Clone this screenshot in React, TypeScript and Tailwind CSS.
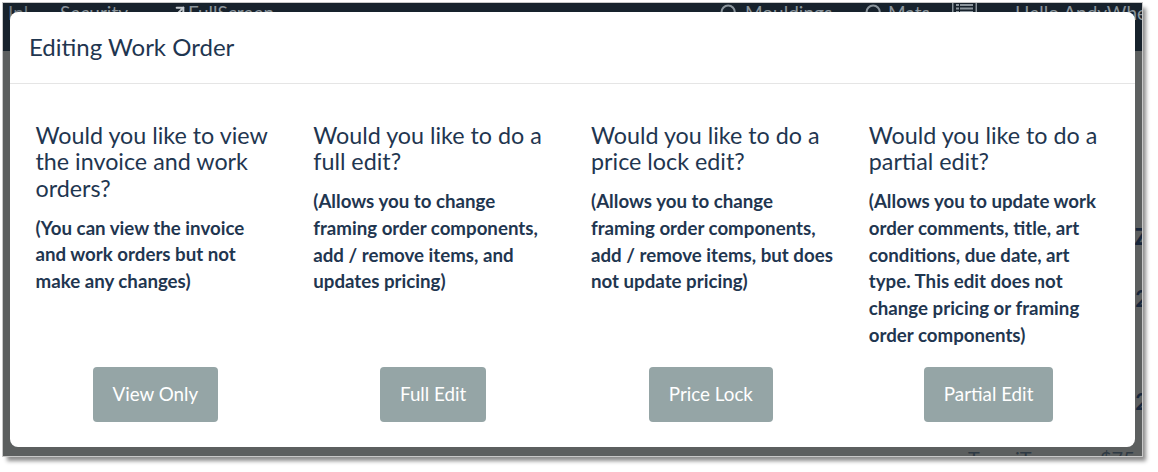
import { ArrowUpRight, Search } from "lucide-react";

const options = [
  {
    title: "Would you like to view the invoice and work orders?",
    note: "(You can view the invoice and work orders but not make any changes)",
    action: "View Only",
  },
  {
    title: "Would you like to do a full edit?",
    note: "(Allows you to change framing order components, add / remove items, and updates pricing)",
    action: "Full Edit",
  },
  {
    title: "Would you like to do a price lock edit?",
    note: "(Allows you to change framing order components, add / remove items, but does not update pricing)",
    action: "Price Lock",
  },
  {
    title: "Would you like to do a partial edit?",
    note: "(Allows you to update work order comments, title, art conditions, due date, art type. This edit does not change pricing or framing order components)",
    action: "Partial Edit",
  },
];

function ListIcon() {
  return (
    <svg viewBox="0 0 25 20" className="ml-[24px] h-[20px] w-[25px] shrink-0 text-[#8b959c]" fill="currentColor">
      <rect x="0" y="0" width="1.5" height="20" />
      <rect x="23.5" y="0" width="1.5" height="20" />
      <rect x="4" y="1" width="3" height="2" />
      <rect x="8" y="1" width="13" height="2" />
      <rect x="4" y="4.5" width="3" height="2" />
      <rect x="8" y="4.5" width="13" height="2" />
      <rect x="4" y="8" width="3" height="2" />
      <rect x="8" y="8" width="13" height="2" />
    </svg>
  );
}

function NavBar() {
  return (
    <div className="flex h-[48px] items-start overflow-hidden whitespace-nowrap bg-[#17222c] text-[19px] leading-[20px] text-[#8b959c]">
      <span className="ml-[5px] w-[52px] shrink-0 text-[#6f7a82]">Inl</span>
      <span className="w-[68px] shrink-0">Security</span>
      <ArrowUpRight className="ml-[44px] h-[16px] w-[16px] shrink-0 text-[#c5cbd0]" strokeWidth={3} />
      <span className="w-[84px] shrink-0">FullScreen</span>
      <Search className="ml-[447px] h-[20px] w-[20px] shrink-0" strokeWidth={2.5} />
      <span className="ml-[6px] w-[82px] shrink-0">Mouldings</span>
      <Search className="ml-[37px] h-[20px] w-[20px] shrink-0" strokeWidth={2.5} />
      <span className="ml-[4px] w-[40px] shrink-0">Mats</span>
      <ListIcon />
      <span className="ml-[38px] shrink-0">Hello AndyWhe</span>
    </div>
  );
}

function OptionColumn({ title, note, action }: { title: string; note: string; action: string }) {
  return (
    <div className="flex flex-col">
      <div className="pl-[19px] pr-[15px]">
        <h3 className="text-[23.3px] leading-[26.5px] font-normal text-[#1f3650]">{title}</h3>
        <p className="mt-[13.5px] text-[18.7px] leading-[26.8px] font-bold text-[#1f3650]">{note}</p>
      </div>
      <div className="mt-auto flex justify-center">
        <button className="h-[55px] rounded-[4px] bg-[#95a5a6] px-[20px] text-[18.8px] text-white">{action}</button>
      </div>
    </div>
  );
}

export default function App() {
  return (
    <div className="h-[472px] w-[1158px] overflow-hidden bg-white pl-[3px] pt-[3px] font-['Lato',sans-serif]">
      <div className="relative h-[453px] w-[1139px] overflow-hidden bg-[#5c5f5f] outline outline-[1px] outline-[#c8c8c8]">
        <NavBar />
        <div className="mr-[-6px] flex flex-col items-end text-[22px] font-bold leading-[20px] text-[#17263a]">
          <span className="mt-[58px]">l</span>
          <span className="mt-[98px] font-black">Z</span>
          <span className="mt-[42px]">2</span>
          <span className="mt-[33px]">(</span>
          <span className="mt-[30px]">2</span>
        </div>
        <div className="mt-[36px] flex text-[20px] leading-[20px] text-[#2f3a44]">
          <span className="ml-[965px] w-[47px] shrink-0">T</span>
          <span className="w-[85px] shrink-0">iT</span>
          <span className="shrink-0">$75</span>
        </div>
        <div className="absolute left-[7px] top-[9px] flex h-[435px] w-[1125px] flex-col rounded-[8px] bg-white">
          <div className="flex h-[72px] items-center border-b border-[#e5e5e5] pb-[2px] pl-[19px]">
            <h2 className="text-[24px] font-normal text-[#1f3650]">Editing Work Order</h2>
          </div>
          <div className="grid flex-1 grid-cols-4 pb-[25px] pl-[6.5px] pr-[7.5px] pt-[37.5px]">
            {options.map((option) => (
              <OptionColumn key={option.action} {...option} />
            ))}
          </div>
        </div>
      </div>
      <div className="mt-[-453px] h-[453px] w-[1139px] shadow-[4px_5px_4px_rgba(0,0,0,0.45)]" />
    </div>
  );
}
